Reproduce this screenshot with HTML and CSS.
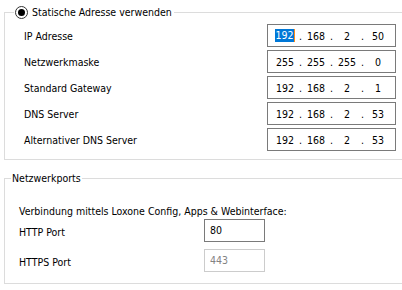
FILE: index.html
```html
<!DOCTYPE html>
<html lang="de">

    <head>
        <meta charset="UTF-8">
        <meta name="viewport" content="width=device-width, initial-scale=1.0">
        <title>Netzwerk</title>

        <link rel="stylesheet" href="styles.css">
    </head>

    <body>

        <fieldset class="group static">
            <legend class="radioLegend"><span class="radio"></span>Statische Adresse verwenden</legend>

            <div class="row">
                <span class="label">IP Adresse</span>
                <div class="ipBox">
                    <span class="octet"><span class="sel">192</span></span><span class="dot">.</span>
                    <span class="octet">168</span><span class="dot">.</span>
                    <span class="octet">2</span><span class="dot">.</span>
                    <span class="octet">50</span>
                </div>
            </div>

            <div class="row">
                <span class="label">Netzwerkmaske</span>
                <div class="ipBox">
                    <span class="octet">255</span><span class="dot">.</span>
                    <span class="octet">255</span><span class="dot">.</span>
                    <span class="octet">255</span><span class="dot">.</span>
                    <span class="octet">0</span>
                </div>
            </div>

            <div class="row">
                <span class="label">Standard Gateway</span>
                <div class="ipBox">
                    <span class="octet">192</span><span class="dot">.</span>
                    <span class="octet">168</span><span class="dot">.</span>
                    <span class="octet">2</span><span class="dot">.</span>
                    <span class="octet">1</span>
                </div>
            </div>

            <div class="row">
                <span class="label">DNS Server</span>
                <div class="ipBox">
                    <span class="octet">192</span><span class="dot">.</span>
                    <span class="octet">168</span><span class="dot">.</span>
                    <span class="octet">2</span><span class="dot">.</span>
                    <span class="octet">53</span>
                </div>
            </div>

            <div class="row">
                <span class="label">Alternativer DNS Server</span>
                <div class="ipBox">
                    <span class="octet">192</span><span class="dot">.</span>
                    <span class="octet">168</span><span class="dot">.</span>
                    <span class="octet">2</span><span class="dot">.</span>
                    <span class="octet">53</span>
                </div>
            </div>
        </fieldset>

        <fieldset class="group ports">
            <legend class="textLegend">Netzwerkports</legend>

            <div class="intro">Verbindung mittels Loxone Config, Apps &amp; Webinterface:</div>

            <div class="portRow">
                <span class="portLabel">HTTP Port</span>
                <div class="portBox">80</div>
            </div>

            <div class="portRow">
                <span class="portLabel">HTTPS Port</span>
                <div class="portBox disabled">443</div>
            </div>
        </fieldset>

    </body>

</html>
```

FILE: styles.css
```css
body {
    font-family: "DejaVu Sans Condensed", "Liberation Sans", Arial, sans-serif;
    font-size: 10.5px;
    color: #000;
    background-color: #fff;
    margin: 0;
    padding: 0;
}

.group {
    border: 1px solid #dcdcdc;
    border-right: none;
    margin: 0 0 0 4px;
    min-width: 0;
}

/* static address box */
.static {
    margin-top: 5px;
    padding: 5px 0 8px 19px;
    display: flex;
    flex-direction: column;
    gap: 3px;
}

.radioLegend {
    display: flex;
    align-items: center;
    gap: 4px;
    height: 14px;
    line-height: 14px;
    padding: 0 2px 0 1px;
    margin-left: -10px;
}

.radio {
    width: 11px;
    height: 11px;
    border: 1px solid #333;
    border-radius: 50%;
    display: flex;
    align-items: center;
    justify-content: center;
    background-color: #fff;
}

.radio::after {
    content: "";
    width: 7px;
    height: 7px;
    border-radius: 50%;
    background-color: #000;
}

.row {
    display: flex;
    align-items: center;
    height: 23px;
}

.label {
    width: 243px;
}

.ipBox {
    width: 129px;
    height: 23px;
    box-sizing: border-box;
    border: 1px solid #7a7a7a;
    display: flex;
    align-items: center;
    padding-left: 4px;
    white-space: nowrap;
    font-size: 0;
}

.octet {
    width: 26px;
    text-align: center;
    font-size: 10.5px;
}

.dot {
    width: 5px;
    text-align: center;
    font-size: 10.5px;
}

.sel {
    background-color: #0078d7;
    color: #fff;
    border-right: 1px solid #ff8c1a;
    line-height: 13px;
    display: inline-block;
}

/* network ports box */
.ports {
    margin-top: 11px;
    padding: 19px 0 11px 14px;
}

.textLegend {
    height: 14px;
    line-height: 14px;
    padding: 0 1px;
    margin-left: -8px;
}

.intro {
    line-height: 14px;
    margin-bottom: 1px;
}

.portRow {
    display: flex;
    align-items: center;
    height: 23px;
}

.portRow + .portRow {
    margin-top: 7px;
}

.portLabel {
    width: 185px;
    padding-top: 2px;
}

.portBox {
    width: 61px;
    height: 23px;
    box-sizing: border-box;
    border: 1px solid #7a7a7a;
    padding-left: 5px;
    line-height: 21px;
}

.disabled {
    border-color: #cccccc;
    color: #838383;
}
```
